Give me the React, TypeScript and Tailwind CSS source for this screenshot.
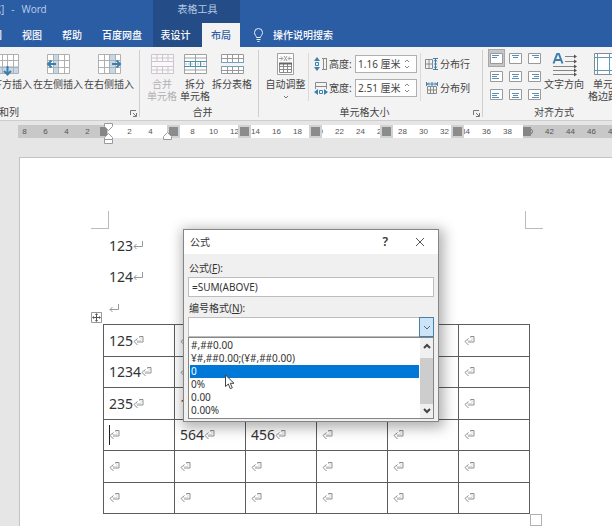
import type { ReactNode } from "react";

/* ---------- ribbon icons ---------- */

function InsertIcon({ dir }: { dir: "down" | "left" | "right" }) {
  return (
    <svg width="25" height="24" viewBox="0 0 25 24" fill="none">
      <rect x="1.5" y="1.5" width="22" height="19" fill="#fff" />
      {dir === "down" && <rect x="2" y="13" width="21" height="7" fill="#c5d8e8" />}
      {dir === "left" && <rect x="7" y="2" width="6" height="18" fill="#c5d8e8" />}
      {dir === "right" && <rect x="12" y="2" width="6" height="18" fill="#c5d8e8" />}
      <path d="M1.5 1.5h22v19h-22zM1.5 7.5h22M1.5 14.5h22M7.5 1.5v19M12.5 1.5v19M18.5 1.5v19" stroke="#b0b0b0" />
      {dir === "down" && <path d="M12.500 13v8M9 18l3.500 3.500 3.500-3.500" stroke="#3c7fae" strokeWidth="2" />}
      {dir === "left" && <path d="M10 11H2M5.500 7.500L2 11l3.500 3.500" stroke="#3c7fae" strokeWidth="2" />}
      {dir === "right" && <path d="M15 11h8M19.500 7.500L23 11l-3.500 3.500" stroke="#3c7fae" strokeWidth="2" />}
    </svg>
  );
}

function MergeIcon() {
  return (
    <svg width="25" height="24" viewBox="0 0 25 24" fill="none" stroke="#cbc6cb">
      <path fill="#faf8fa" d="M1.500 1.500h22v19h-22zM1.500 8.500h22M1.500 13.500h22M7 1.500v7M12.500 1.500v7M18 1.500v7M7 13.500v7M12.500 13.500v7M18 13.500v7" />
      <path d="M1.500 5h22M1.500 17h22" />
    </svg>
  );
}

function SplitCellIcon() {
  return (
    <svg width="25" height="24" viewBox="0 0 25 24" fill="none">
      <path fill="#fff" stroke="#a0a0a0" d="M1.500 1.500h22v19h-22zM1.500 5h22M1.500 17h22M12.500 1.500v7M12.500 13.500v7" />
      <path stroke="#4b93a8" d="M1 8.500h23M1 13.500h23M7.500 9v4M12.500 9v4M17.500 9v4" />
      <path stroke="#4b93a8" strokeDasharray="2 1" d="M2 11h21" strokeOpacity="0.5" />
    </svg>
  );
}

function SplitTableIcon() {
  return (
    <svg width="25" height="24" viewBox="0 0 25 24" fill="#fff" stroke="#999">
      <path d="M1.500 1.500h22v8h-22zM1.500 5.500h22M7.500 1.500v8M12.500 1.500v8M18.500 1.500v8" />
      <path d="M1.500 13.500h22v7h-22zM1.500 17.500h22M7.500 13.500v7M12.500 13.500v7M18.500 13.500v7" />
      <path d="M1 9.500h23M1 13.500h23" stroke="#6fa5c0" />
    </svg>
  );
}

function AutoFitIcon() {
  return (
    <svg width="25" height="24" viewBox="0 0 25 24" fill="none">
      <path d="M4.500.5h16v21h-16z" fill="#fff" stroke="#a0a0a0" />
      <path d="M6 5.500h3.500M15.500 5.500H19M8 3.500l2 2-2 2M17 3.500l-2 2 2 2M11 3l3 5M14 3l-3 5" stroke="#9a9a9a" />
      <path d="M6.500 10.500h12v9h-12zM6.500 13.500h12M6.500 16.500h12M10.500 10.500v9M14.500 10.500v9" stroke="#8a8a8a" />
      <path d="M6 10.500h13" stroke="#666" strokeWidth="2" />
    </svg>
  );
}

function HeightIcon() {
  return (
    <svg width="14" height="14" viewBox="0 0 14 14" fill="none">
      <path d="M3 0l3 4H0zM3 14l3-4H0z" fill="#3c7fae" />
      <path d="M1.500 5.500h3v3h-3z" stroke="#3c7fae" />
      <path d="M8 1.500h5M8 12.500h5M9.500 1.500h3v11h-3z" stroke="#8a8a8a" />
    </svg>
  );
}

function WidthIcon() {
  return (
    <svg width="14" height="14" viewBox="0 0 14 14" fill="none">
      <path d="M1.500 1.500h11v4h-11zM1.500 5v3M12.500 5v3" stroke="#8a8a8a" />
      <path d="M0 11l4-3v6zM14 11l-4-3v6z" fill="#3c7fae" />
      <path d="M5.500 9.500h3v3h-3z" stroke="#3c7fae" />
    </svg>
  );
}

function RowsIcon() {
  return (
    <svg width="14" height="12" viewBox="0 0 14 12" fill="none">
      <path d="M.5 1.500h7v9h-7zM.5 6h7M4 1.500v9" stroke="#8a8a8a" />
      <path d="M8 .5h5M8 11.500h5M10.500 1v10M9 3.500l1.500-2 1.500 2M9 8.500l1.500 2 1.500-2M9 6h3" stroke="#3c7fae" />
    </svg>
  );
}

function ColumnsIcon() {
  return (
    <svg width="14" height="12" viewBox="0 0 14 12" fill="none">
      <path d="M2.500 4.500h9v7h-9zM2.500 8h9M5.500 4.500v7M8.500 4.500v7" stroke="#8a8a8a" />
      <path d="M1.500 0v4M12.500 0v4M2 2h10M7 0v4M4 .5L2.500 2 4 3.500M10 .5L11.500 2 10 3.500" stroke="#3c7fae" />
    </svg>
  );
}

const glyphTop = [2, 3, 4];

function AlignIcon({ row, col }: { row: number; col: number }) {
  const y = glyphTop[row] + 0.5;
  const x1 = [2, 3, 4][col];
  const x2 = [9, 10, 11][col];
  const s1 = [2, 4, 6][col];
  const s2 = [7, 9, 11][col];
  return (
    <svg width="13" height="11" viewBox="0 0 13 11" fill="none">
      <path d="M.5.5h12v10H.5z" fill="#fff" stroke="#9a9a9a" />
      <path d={`M${x1} ${y}H${x2}M${s1} ${y + 2}H${s2}`} stroke="#5a8fb5" />
      {row > 0 && <path d={`M${x1} ${y + 4}H${x2}`} stroke="#5a8fb5" />}
    </svg>
  );
}

function TextDirectionIcon() {
  return (
    <svg width="25" height="24" viewBox="0 0 25 24" fill="none">
      <path d="M1.500 10.500L5.500 0h1l4 10.500M3 7h6" stroke="#3c7fae" strokeWidth="2" />
      <path d="M13 3.500h9M13 8.500h9M1 13.500h21M1 17.500h21M1 21.500h21" stroke="#858585" />
      <path d="M22 1.500l3 2-3 2zM22 6.500l3 2-3 2zM22 11.500l3 2-3 2zM22 15.500l3 2-3 2zM22 19.500l3 2-3 2z" fill="#555" />
    </svg>
  );
}

function MarginsIcon() {
  return (
    <svg width="25" height="24" viewBox="0 0 25 24" fill="none">
      <path d="M3.500.5h18v21h-18z" fill="#fff" stroke="#8a8a8a" />
      <path d="M6.500 1v20M18.500 1v20M4 4.500h17M4 17.500h17" stroke="#5d9ab5" />
    </svg>
  );
}

function Launcher({ label }: { label: string }) {
  return (
    <button aria-label={label} className="absolute right-[2px] bottom-[3px]">
      <svg width="7" height="7" viewBox="0 0 7 7" fill="none" stroke="#777">
        <path d="M.5 5V.5H6M3 3l3 3M6.500 3v3.500H3" />
      </svg>
    </button>
  );
}

/* ---------- ribbon parts ---------- */

function BigButton({ icon, lines, muted }: { icon: ReactNode; lines: string[]; muted?: boolean }) {
  return (
    <button className={`flex shrink-0 flex-col items-center whitespace-nowrap ${muted ? "text-[#b4b0b4]" : "text-[#444]"}`}>
      {icon}
      <span className="mt-px flex flex-col">
        {lines.map((l) => (
          <span key={l} className="block leading-3">{l}</span>
        ))}
      </span>
    </button>
  );
}

function Group({ name, className, launcher, children }: { name: string; className: string; launcher?: boolean; children: ReactNode }) {
  return (
    <section aria-label={name} className={`relative flex shrink-0 flex-col ${className}`}>
      <div className="flex h-[52px] items-start">{children}</div>
      <div className="mt-auto mb-[2px] text-center leading-3 text-[#444]">{name}</div>
      {launcher && <Launcher label={`${name}设置`} />}
    </section>
  );
}

const Divider = () => <div className="mt-[-3px] mb-[3px] w-px shrink-0 bg-[#cfcfcf]" />;

function SizeField({ id, label, value, icon }: { id: string; label: string; value: string; icon: ReactNode }) {
  return (
    <div className="flex h-[18px] items-center">
      {icon}
      <label htmlFor={id} className="ml-px w-[26px] whitespace-nowrap">{label}</label>
      <div className="flex h-[18px] w-[62px] border border-[#b0b0b0] bg-white">
        <input id={id} defaultValue={value} className="w-0 flex-1 pl-[2px] outline-none" />
        <div className="flex w-3 flex-col justify-evenly">
          <button aria-label={`增加${label}`}>
            <svg width="6" height="4" viewBox="0 0 6 4" fill="none" stroke="#888"><path d="M1 3l2-2 2 2" /></svg>
          </button>
          <button aria-label={`减少${label}`}>
            <svg width="6" height="4" viewBox="0 0 6 4" fill="none" stroke="#888"><path d="M1 1l2 2 2-2" /></svg>
          </button>
        </div>
      </div>
    </div>
  );
}

function Ribbon() {
  return (
    <div className="flex h-[74px] shrink-0 overflow-hidden border-b border-[#cdcdcd] bg-[#f3f3f3] pt-[6px] text-[10px] text-[#444]">
      <section aria-label="行和列" className="relative flex w-[139px] shrink-0 flex-col overflow-hidden">
        <div className="flex justify-end gap-px pr-[5px]">
          <BigButton icon={<InsertIcon dir="down" />} lines={["在下方插入"]} />
          <BigButton icon={<InsertIcon dir="left" />} lines={["在左侧插入"]} />
          <BigButton icon={<InsertIcon dir="right" />} lines={["在右侧插入"]} />
        </div>
        <div className="mt-auto mb-[2px] -ml-[11px] leading-3">行和列</div>
        <Launcher label="行和列设置" />
      </section>
      <Divider />
      <Group name="合并" className="w-[118px] pl-[7px]">
        <BigButton icon={<MergeIcon />} lines={["合并", "单元格"]} muted />
        <div className="w-[3px]" />
        <BigButton icon={<SplitCellIcon />} lines={["拆分", "单元格"]} />
        <div className="w-[2px]" />
        <BigButton icon={<SplitTableIcon />} lines={["拆分表格"]} />
      </Group>
      <Divider />
      <Group name="单元格大小" className="w-[223px] pr-3" launcher>
        <div className="flex w-[51px] justify-center pl-1">
          <button className="flex flex-col items-center whitespace-nowrap">
            <AutoFitIcon />
            <span className="mt-px leading-3">自动调整</span>
            <svg className="mt-[5px]" width="6" height="4" viewBox="0 0 6 4" fill="none" stroke="#777"><path d="M1 1l2 2 2-2" /></svg>
          </button>
        </div>
        <div className="h-[48px] w-px bg-[#dadada]" />
        <div className="flex flex-col gap-[6px] pt-[2px] pl-[5px]">
          <SizeField id="row-height" label="高度:" value="1.16 厘米" icon={<HeightIcon />} />
          <SizeField id="col-width" label="宽度:" value="2.51 厘米" icon={<WidthIcon />} />
        </div>
        <div className="ml-[3px] h-[48px] w-px bg-[#dadada]" />
        <div className="flex flex-col gap-[6px] pt-[2px] pl-1">
          <button className="flex h-[18px] items-center gap-px whitespace-nowrap"><RowsIcon />分布行</button>
          <button className="flex h-[18px] items-center gap-px whitespace-nowrap"><ColumnsIcon />分布列</button>
        </div>
      </Group>
      <Divider />
      <Group name="对齐方式" className="w-[142px]">
        <div className="-mt-1 grid grid-cols-3 gap-x-[2px] pl-[5px]">
          {[0, 1, 2].map((r) =>
            [0, 1, 2].map((c) => (
              <button
                key={`${r}${c}`}
                aria-label={`对齐 ${r + 1}-${c + 1}`}
                className={`flex h-[18px] w-[17px] items-center justify-center ${r + c === 0 ? "bg-[#c6c6c6] ring-1 ring-[#a8a8a8] ring-inset" : ""}`}
              >
                <AlignIcon row={r} col={c} />
              </button>
            )),
          )}
        </div>
        <div className="w-px" />
        <BigButton icon={<TextDirectionIcon />} lines={["文字方向"]} />
        <div className="w-1" />
        <BigButton icon={<MarginsIcon />} lines={["单元", "格边距"]} />
      </Group>
    </div>
  );
}

function Header() {
  return (
    <header className="relative flex h-[47px] shrink-0 overflow-hidden bg-[#2b5da4] text-[10px] text-white">
      <div className="flex w-[153px] shrink-0 flex-col">
        <div className="flex h-[23px] items-start gap-[7px] pt-[2px] text-[#b4c8e4]">
          <span className="-ml-[9px] leading-[14px]">式]</span>
          <span className="leading-[14px]">-</span>
          <span className="leading-[14px]">Word</span>
        </div>
        <nav className="flex h-6 items-center font-medium whitespace-nowrap">
          <a href="#review" className="-ml-[18px] w-5">审阅</a>
          <a href="#view" className="ml-5 w-5">视图</a>
          <a href="#help" className="ml-5 w-5">帮助</a>
          <a href="#pan" className="ml-5">百度网盘</a>
        </nav>
      </div>
      <div className="flex w-[87px] shrink-0 flex-col bg-[#244d87]">
        <div className="h-[23px] pt-[2px] pl-[2px] text-center leading-[14px] text-[#b4c8e4]">表格工具</div>
        <nav className="flex h-6 font-medium whitespace-nowrap">
          <a href="#design" className="flex w-[49px] items-center justify-center pr-1">表设计</a>
          <a href="#layout" aria-current="page" className="flex w-[38px] items-center justify-center bg-[#f3f3f3] text-[#2b5da4]">布局</a>
        </nav>
      </div>
      <button className="mt-[23px] ml-[13px] flex h-6 items-center gap-[9px] font-medium whitespace-nowrap">
        <svg width="11" height="14" viewBox="0 0 11 14" fill="none" stroke="#e6eefa">
          <path d="M3.500 9.500C3.500 8 1.500 7 1.500 4.500a4 4 0 0 1 8 0c0 2.500-2 3.500-2 5zM3.500 11.500h4M4.500 13.500h2" />
        </svg>
        操作说明搜索
      </button>
    </header>
  );
}

/* ---------- ruler ---------- */

const rulerNumbers = [8, 6, 4, 2, 0, 2, 4, 6, 8, 10, 12, 14, 16, 18, 20, 22, 24, 26, 28, 30, 32, 34, 36, 38, 40, 42, 44, 46, 48];
const columnStops = [
  "left-[149px]",
  "left-[220px]",
  "left-[291px]",
  "left-[362px]",
  "left-[433px]",
];

function Ruler() {
  return (
    <div className="relative mt-1 ml-[18px] h-[13px] shrink-0 bg-[linear-gradient(to_right,#c8c8c8_90px,#fff_90px,#fff_505px,#c8c8c8_505px)]">
      <div className="flex h-full items-center overflow-hidden text-[8px] text-[#555]">
        <div className="-ml-1 flex">
          {rulerNumbers.map((n, i) => (
            <span key={i} className="w-[21px] shrink-0 text-center leading-[13px] font-['Liberation_Sans',sans-serif]">{n || ""}</span>
          ))}
        </div>
      </div>
      <span className="absolute top-[2px] left-[82px] h-[9px] w-[7px] bg-[#868686]" />
      {columnStops.map((c) => (
        <span key={c} className={`absolute top-0 h-[13px] w-[13px] bg-[#d2d2d2] p-[2px] ${c}`}>
          <span className="block h-[9px] w-[9px] bg-[#8c8c8c]" />
        </span>
      ))}
      <span className="absolute top-[2px] left-[505px] h-[9px] w-[8px] bg-[#868686]" />
      <svg className="absolute -top-[2px] left-[86px]" width="9" height="22" viewBox="0 0 9 22" fill="#fff" stroke="#9a9a9a">
        <path d="M.5.5h8v3l-4 4-4-4zM4.500 10.500l4 4v2h-8v-2zM.5 16.500h8v4h-8z" />
      </svg>
      <svg className="absolute top-[7px] left-[145px]" width="9" height="9" viewBox="0 0 9 9" fill="#fff" stroke="#9a9a9a">
        <path d="M4.500.5l4 4v3h-8v-3z" />
      </svg>
    </div>
  );
}

/* ---------- document ---------- */

function ParaMark() {
  return (
    <svg className="shrink-0" width="10" height="9" viewBox="0 0 10 9" fill="none" stroke="#999">
      <path d="M9.500 0v5.500H1M3.500 3L1 5.500 3.500 8" />
    </svg>
  );
}

function CellMark() {
  return (
    <svg className="shrink-0" width="11" height="10" viewBox="0 0 11 10" fill="none" stroke="#8f8f8f">
      <path d="M6.500 1.500v-1h3.500v5.500H4M4.500 2.500L1 5.500l3.500 3.500" />
      <path d="M1.500 4.500H8V1" stroke="#c4c4c4" strokeWidth="0.6" />
    </svg>
  );
}

const rows = [
  ["125", "", "", "", "", ""],
  ["1234", "", "", "", "", ""],
  ["235", "123", "", "", "", ""],
  ["", "564", "456", "", "", ""],
  ["", "", "", "", "", ""],
  ["", "", "", "", "", ""],
];

function Page() {
  return (
    <div className="mt-[19px] ml-px flex-1 overflow-hidden border-t border-l border-[#c3c3c3] bg-white pt-[53px] pl-[71px] text-[14px] text-[#333]">
      <div className="flex w-[452px] justify-between">
        <div className="h-[18px] w-[18px] border-r border-b border-[#bbb]" />
        <div className="h-[18px] w-[18px] border-b border-l border-[#bbb]" />
      </div>
      <div className="flex h-8 items-center pl-[18px]">123<ParaMark /></div>
      <div className="flex h-[31px] items-center pl-[18px]">124<ParaMark /></div>
      <div className="flex h-8 items-center pl-[18px]"><ParaMark /></div>
      <div className="relative ml-3 w-[427px]">
        <table className="w-full table-fixed border-collapse">
          <tbody>
            {rows.map((r, i) => (
              <tr key={i} className={i % 2 ? "h-[31px]" : "h-8"}>
                {r.map((c, j) => (
                  <td key={j} className="border border-[#5c5c5c] p-0 pl-[5px]">
                    <div className="flex items-center leading-5">
                      {i === 3 && j === 0 && <span className="-mr-px h-5 w-px bg-[#222]" />}
                      {c}
                      <CellMark />
                    </div>
                  </td>
                ))}
              </tr>
            ))}
          </tbody>
        </table>
        <svg className="absolute -top-3 -left-3" width="11" height="11" viewBox="0 0 11 11" fill="#fff">
          <path d="M.5.5h10v10H.5z" stroke="#999" />
          <path d="M5.500 2v7M2 5.500h7" stroke="#555" />
          <path d="M5.500 1l1.500 2H4zM5.500 10L4 8h3zM1 5.500L3 4v3zM10 5.500L8 7V4z" fill="#555" />
        </svg>
        <span className="absolute -right-3 -bottom-3 h-3 w-3 border border-[#b0b0b0] bg-white" />
      </div>
      <div className="flex h-8 items-center pl-[18px]"><ParaMark /></div>
    </div>
  );
}

/* ---------- formula dialog ---------- */

const formats = ["#,##0.00", "¥#,##0.00;(¥#,##0.00)", "0", "0%", "0.00", "0.00%"];

function FormulaDialog() {
  return (
    <div role="dialog" aria-label="公式" className="absolute top-[229px] left-[183px] flex w-64 flex-col border border-[#858585] bg-[#f0f0f0] text-[10px] text-[#333] shadow-[2px_3px_12px_3px_rgba(0,0,0,0.3)]">
      <div className="flex h-6 items-center bg-white pl-[6px]">
        <h1 className="flex-1">公式</h1>
        <button aria-label="帮助" className="mr-[27px] text-[12px] font-semibold">?</button>
        <button aria-label="关闭" className="mr-[13px]">
          <svg width="10" height="10" viewBox="0 0 10 10" fill="none" stroke="#555"><path d="M1 1l8 8M9 1L1 9" /></svg>
        </button>
      </div>
      <div className="flex flex-col px-1 pb-[2px]">
        <label htmlFor="formula" className="mt-[6px] mb-px pl-px leading-4">公式(<u>F</u>):</label>
        <input id="formula" defaultValue="=SUM(ABOVE)" className="h-5 border border-[#bdbdbd] bg-white pl-[3px] outline-none" />
        <label htmlFor="number-format" className="mt-[3px] mb-px pl-px leading-4">编号格式(<u>N</u>):</label>
        <div className="relative flex h-5">
          <select id="number-format" defaultValue="" className="h-5 w-full appearance-none border border-[#bdbdbd] bg-white outline-none">
            <option value=""></option>
            {formats.map((f) => (
              <option key={f}>{f}</option>
            ))}
          </select>
          <span className="pointer-events-none absolute top-0 right-0 flex h-5 w-[15px] items-center justify-center border border-[#4a7fa8] bg-[#cce4f7]">
            <svg width="8" height="5" viewBox="0 0 8 5" fill="none" stroke="#666"><path d="M1 1l3 3 3-3" /></svg>
          </span>
        </div>
        <div className="flex border border-[#858585] bg-white">
          <ul role="listbox" aria-label="编号格式" className="flex-1 py-px pl-px">
            {formats.map((f, i) => (
              <li key={f} role="option" aria-selected={i === 2} className={`h-[13px] pl-px leading-[13px] ${i === 2 ? "bg-[#0078d7] text-white" : ""}`}>{f}</li>
            ))}
          </ul>
          <div className="ml-px flex w-[13px] flex-col bg-[#f0f0f0]">
            <button aria-label="向上滚动" className="flex h-5 items-center justify-center pb-1">
              <svg width="8" height="6" viewBox="0 0 8 6" fill="none" stroke="#444" strokeWidth="2"><path d="M1 5l3-3 3 3" /></svg>
            </button>
            <div className="flex-1 bg-[#cdcdcd]" />
            <button aria-label="向下滚动" className="flex h-[14px] items-center justify-center">
              <svg width="8" height="6" viewBox="0 0 8 6" fill="none" stroke="#444" strokeWidth="2"><path d="M1 1l3 3 3-3" /></svg>
            </button>
          </div>
        </div>
      </div>
      <svg className="absolute top-[144px] left-[41px]" width="11" height="16" viewBox="0 0 11 16" fill="#fff" stroke="#444">
        <path d="M.5 1v11.500l2.800-2.500 2 4.700 2-.9-2-4.500h3.700z" />
      </svg>
    </div>
  );
}

export default function App() {
  return (
    <div className="relative flex h-screen flex-col overflow-hidden bg-[#e6e6e6] font-['Noto_Sans','Noto_Sans_CJK_SC',sans-serif]">
      <Header />
      <Ribbon />
      <Ruler />
      <div className="flex flex-1 flex-col overflow-hidden pl-[18px]">
        <Page />
      </div>
      <FormulaDialog />
    </div>
  );
}
